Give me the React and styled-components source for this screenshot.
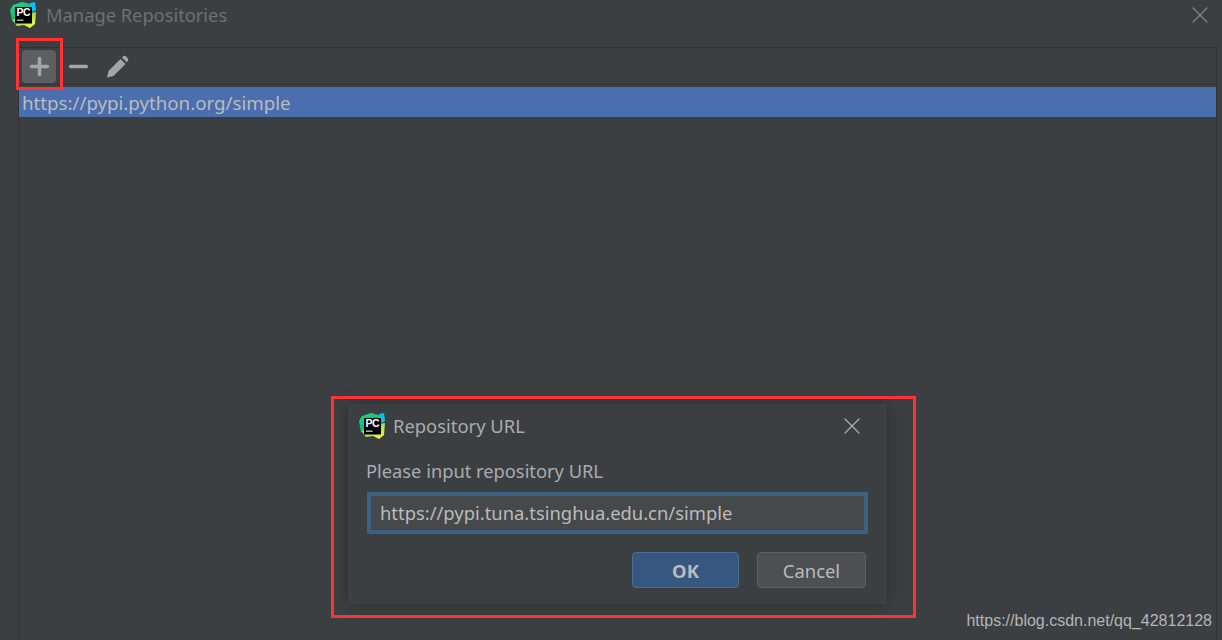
import React, { useId } from "react";
import styled, { createGlobalStyle } from "styled-components";
import { X, Plus, Minus } from "lucide-react";

const GlobalStyle = createGlobalStyle`
  html, body {
    margin: 0;
    padding: 0;
    background: #3c3f41;
  }
`;

const PycharmLogo = ({ size }) => {
  const id = useId();
  return (
    <svg width={size} height={size} viewBox="0 0 26 26">
      <defs>
        <linearGradient id={id + "l"} x1="0" y1="0" x2="0.5" y2="1">
          <stop offset="0" stopColor="#21d789" />
          <stop offset="1" stopColor="#0fae72" />
        </linearGradient>
        <linearGradient id={id + "r"} x1="0" y1="0" x2="0.8" y2="1">
          <stop offset="0" stopColor="#21d789" />
          <stop offset="0.55" stopColor="#a8e04c" />
          <stop offset="1" stopColor="#fcf84a" />
        </linearGradient>
      </defs>
      <polygon points="0,8 3,3 12,0 20,2 24,5 20,14 8,18 2,19" fill={"url(#" + id + "l)"} />
      <polygon points="20,1 25,0 26,8 23,10 20,6" fill="#07c3f2" />
      <polygon points="2,18 7,24 14,23 20,26 25,22 26,10 14,12" fill={"url(#" + id + "r)"} />
      <rect x="5" y="5" width="17" height="16.5" fill="#000" />
      <text x="6.6" y="13.6" fontFamily="'Liberation Sans', sans-serif" fontWeight="700" fontSize="10.5" letterSpacing="-0.5" fill="#fff">PC</text>
      <rect x="7" y="17.6" width="6.5" height="1.2" fill="#d8d8d8" />
    </svg>
  );
};

const Window = styled.div`
  position: relative;
  width: 1222px;
  height: 640px;
  overflow: hidden;
  background: #3c3f41;
  font-family: "Noto Sans", "Open Sans", sans-serif;
`;

const TitleBar = styled.div`
  display: flex;
  align-items: center;
  height: 47px;
  box-sizing: border-box;
  padding: 0 8px 17px 10px;
  gap: 10px;
`;

const WindowTitle = styled.div`
  flex: 1;
  font-size: 18.3px;
  line-height: 30px;
  color: #6e7072;
`;

const CloseIcon = styled(X)`
  color: ${(p) => p.$tone};
  flex: none;
`;

const Panel = styled.div`
  margin: 0 5px 0 18px;
  height: 593px;
  box-sizing: border-box;
  border-left: 1px solid #323232;
  border-right: 1px solid #323232;
  border-top: 1px solid #323232;
`;

const Toolbar = styled.div`
  display: flex;
  align-items: center;
  height: 37px;
  box-sizing: border-box;
  padding: 1px 0 0 3px;
  gap: 5px;
  border-bottom: 1px solid #323232;
`;

const ToolButton = styled.div`
  display: flex;
  align-items: center;
  justify-content: center;
  width: 34px;
  height: 33px;
  border-radius: 4px;
  color: #a3a5a7;
  background: ${(p) => (p.$active ? "#5b5f61" : "transparent")};
`;

const List = styled.div`
  padding-top: 2px;
`;

const Row = styled.div`
  height: 30px;
  box-sizing: border-box;
  padding: 1px 0 0 3px;
  line-height: 30px;
  font-size: 18.7px;
  color: #bbbbbb;
  background: #4b6eaf;
`;

const Dialog = styled.div`
  position: absolute;
  left: 348px;
  top: 404px;
  width: 539px;
  height: 200px;
  box-sizing: border-box;
  padding: 0 20px 0 18px;
  background: #3c3f41;
  box-shadow: 0 0 14px rgba(0, 0, 0, 0.3);
`;

const DialogHeader = styled.div`
  display: flex;
  align-items: center;
  height: 44px;
  margin: 0 1px 0 -7px;
  gap: 8px;
`;

const DialogTitle = styled.div`
  flex: 1;
  margin-bottom: 2px;
  font-size: 18.4px;
  color: #a9acae;
`;

const Label = styled.div`
  margin-top: 10px;
  font-size: 18.3px;
  line-height: 26px;
  color: #a9acae;
`;

const UrlInput = styled.div`
  margin: 8px 0 0 1px;
  width: 501px;
  height: 42px;
  box-sizing: border-box;
  border: 4px solid #3d6185;
  padding-left: 9px;
  background: #45494a;
  font-size: 18.4px;
  line-height: 34px;
  color: #bbbbbb;
`;

const Buttons = styled.div`
  display: flex;
  justify-content: flex-end;
  gap: 18px;
  margin: 18px 1px 0 0;
`;

const Button = styled.div`
  width: ${(p) => (p.$primary ? 107 : 109)}px;
  height: 36px;
  box-sizing: border-box;
  border-radius: 4px;
  text-align: center;
  font-size: 18.4px;
  line-height: 36px;
  color: #bbbbbb;
  font-weight: ${(p) => (p.$primary ? 700 : 400)};
  background: ${(p) => (p.$primary ? "#365880" : "#4c5052")};
  border: 1px solid ${(p) => (p.$primary ? "#4c708c" : "#5e6060")};
`;

const Highlight = styled.div`
  position: absolute;
  left: ${(p) => p.$x}px;
  top: ${(p) => p.$y}px;
  width: ${(p) => p.$w}px;
  height: ${(p) => p.$h}px;
  box-sizing: border-box;
  border: 3px solid #ff3333;
  pointer-events: none;
`;

const Watermark = styled.div`
  position: absolute;
  right: 10px;
  top: 611px;
  font-family: "Liberation Sans", Arial, sans-serif;
  font-size: 16px;
  line-height: 20px;
  color: #b4b5b6;
`;

const PencilIcon = () => (
  <svg width="24" height="24" viewBox="0 0 24 24" fill="currentColor">
    <path d="M2 22.5 L3.5 16 L15.5 4 L20.5 9 L8.5 21 Z" />
    <path d="M17 2.5 L18.6 1 Q19.5 0.4 20.5 1 L23 3.6 Q23.6 4.6 23 5.4 L21.8 7.6 Z" />
  </svg>
);

export default function App() {
  return (
    <Window>
      <GlobalStyle />
      <TitleBar>
        <PycharmLogo size={26} />
        <WindowTitle>Manage Repositories</WindowTitle>
        <CloseIcon $tone="#7f8183" size={28} strokeWidth={1.1} />
      </TitleBar>
      <Panel>
        <Toolbar>
          <ToolButton $active>
            <Plus size={27} strokeWidth={3.2} />
          </ToolButton>
          <ToolButton>
            <Minus size={27} strokeWidth={3} />
          </ToolButton>
          <ToolButton>
            <PencilIcon />
          </ToolButton>
        </Toolbar>
        <List>
          <Row>https://pypi.python.org/simple</Row>
        </List>
      </Panel>

      <Dialog>
        <DialogHeader>
          <PycharmLogo size={26} />
          <DialogTitle>Repository URL</DialogTitle>
          <CloseIcon $tone="#a9acae" size={28} strokeWidth={1.1} />
        </DialogHeader>
        <Label>Please input repository URL</Label>
        <UrlInput>https://pypi.tuna.tsinghua.edu.cn/simple</UrlInput>
        <Buttons>
          <Button $primary>OK</Button>
          <Button>Cancel</Button>
        </Buttons>
      </Dialog>

      <Highlight $x={16} $y={38} $w={47} $h={52} />
      <Highlight $x={331} $y={396} $w={585} $h={222} />
      <Watermark>https://blog.csdn.net/qq_42812128</Watermark>
    </Window>
  );
}
